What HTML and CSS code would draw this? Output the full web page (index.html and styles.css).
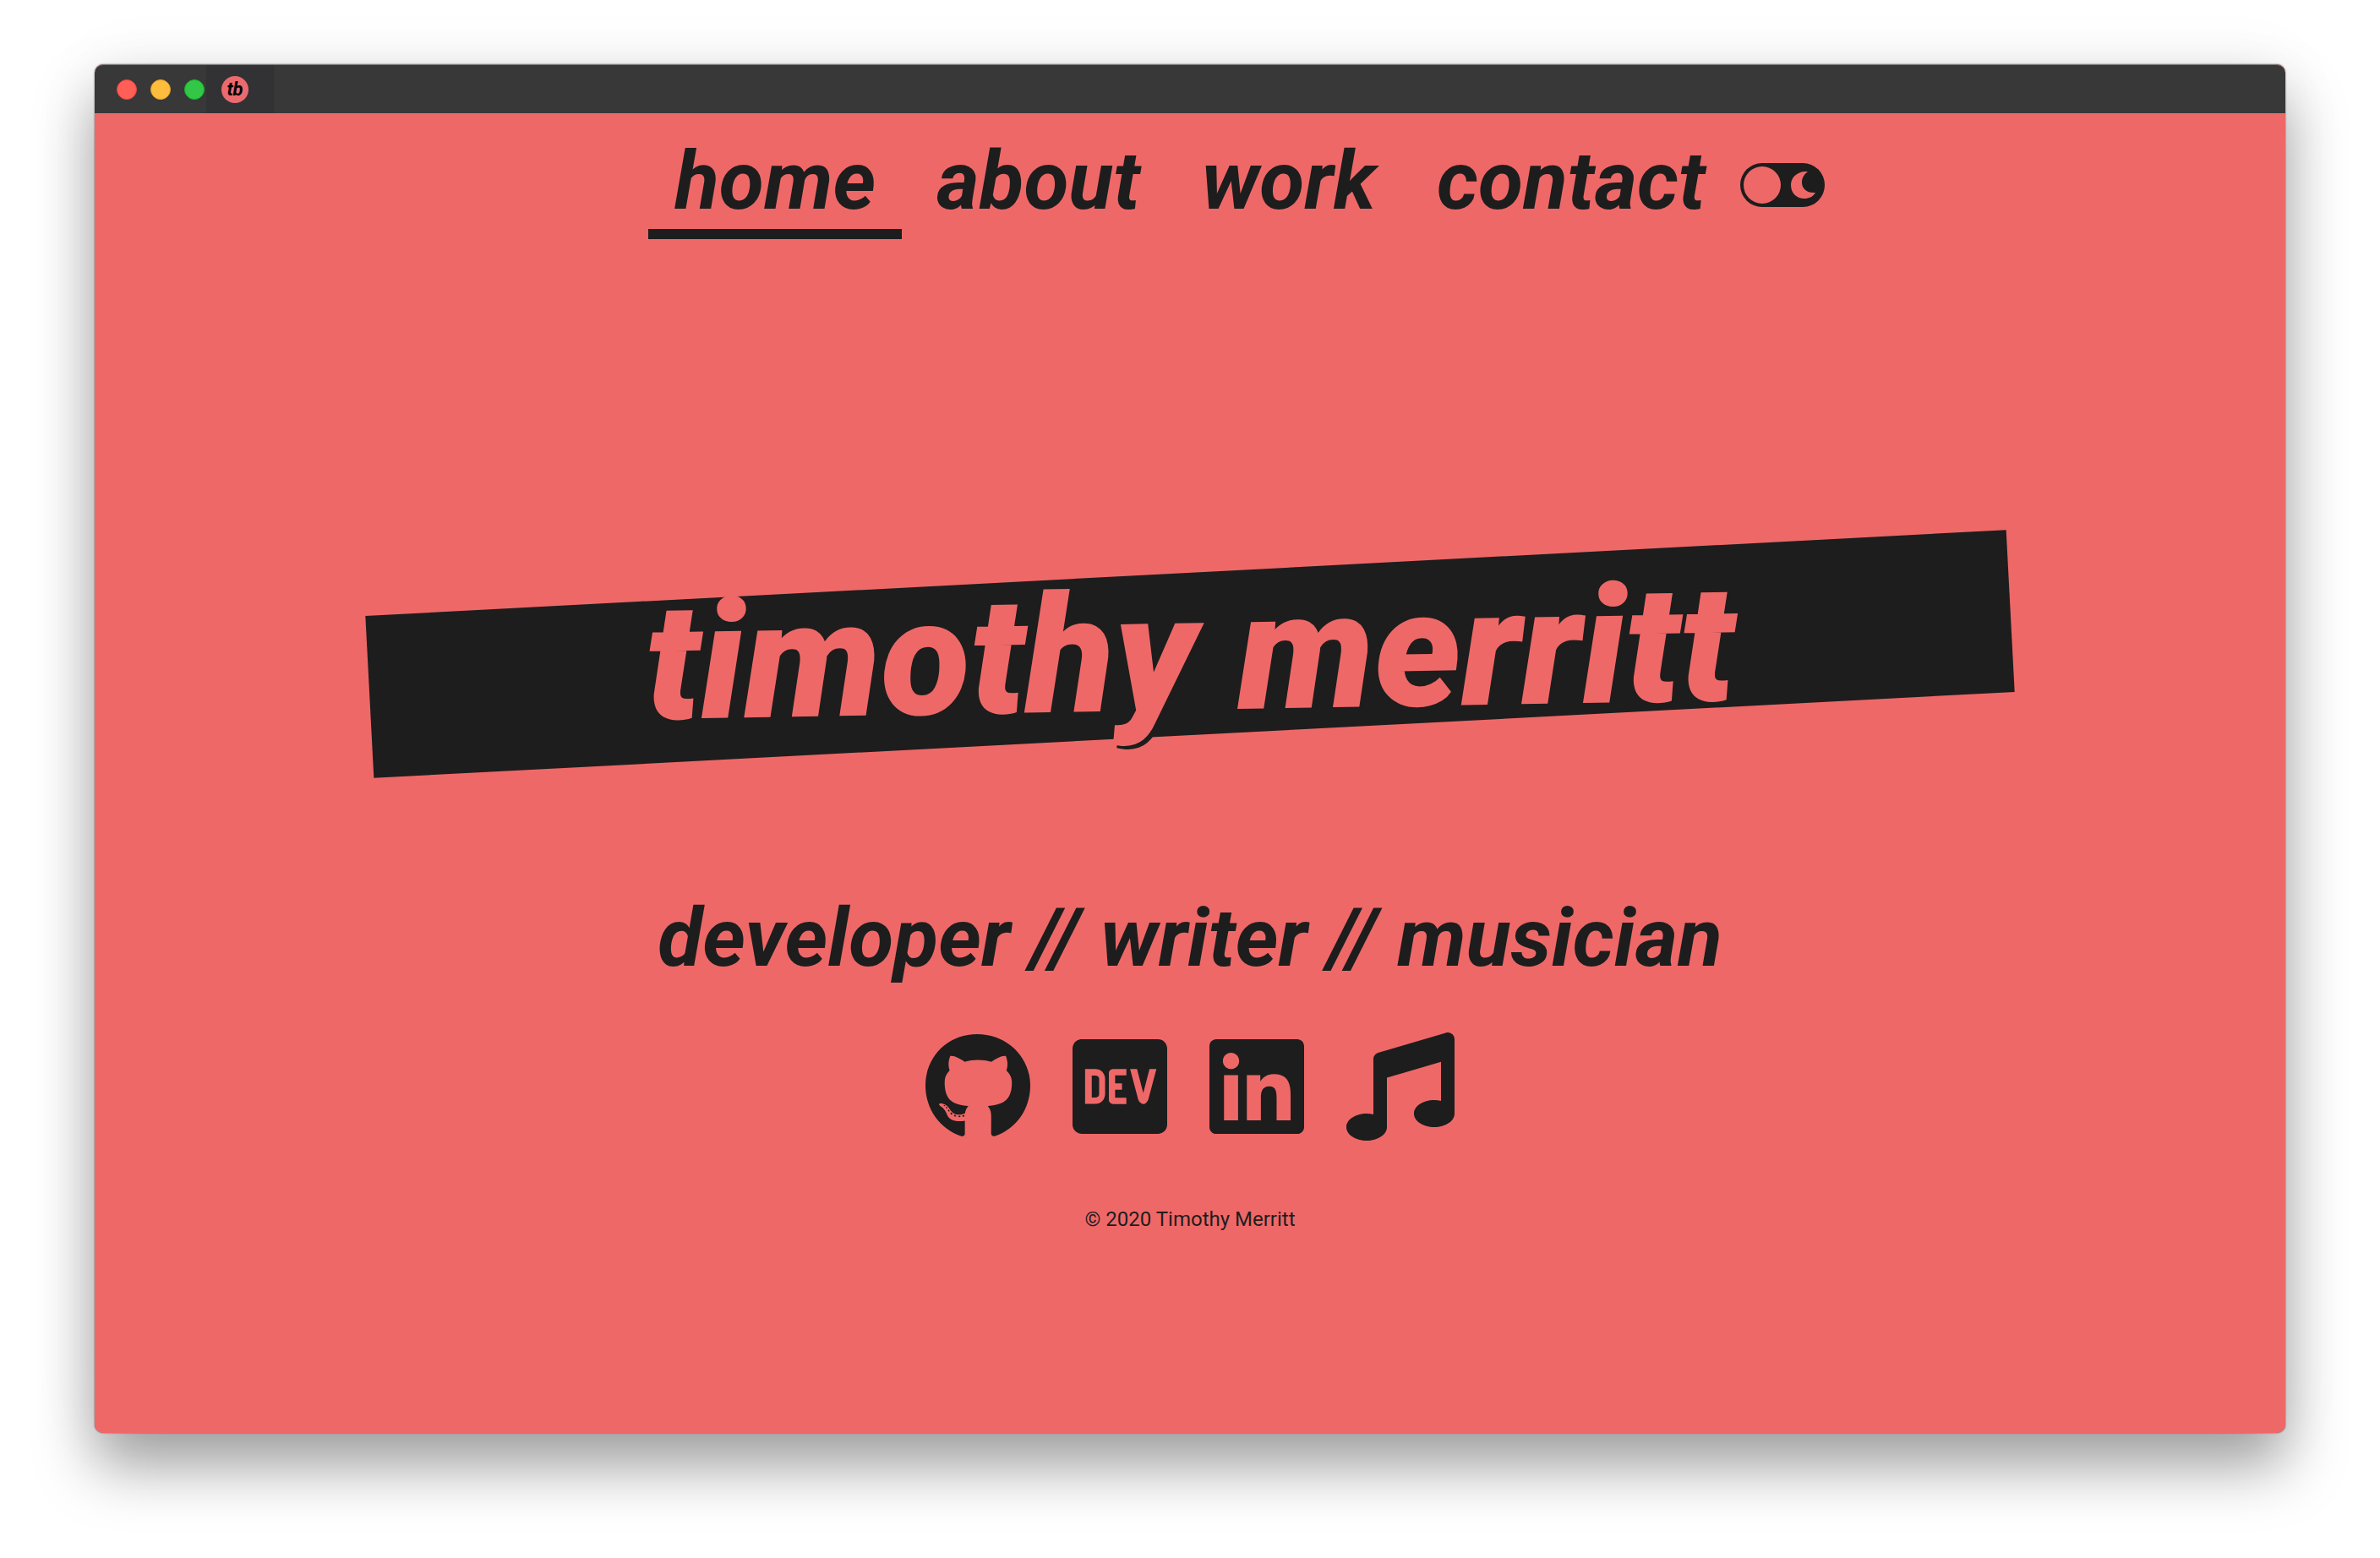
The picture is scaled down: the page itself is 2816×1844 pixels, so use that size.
FILE: index.html
```html
<!DOCTYPE html>
<html lang="en">
<head>
<meta charset="utf-8">
<meta name="viewport" content="width=device-width, initial-scale=1">
<title>timothy merritt</title>
<link rel="stylesheet" href="styles.css">
</head>
<body>
<div class="window">
  <div class="titlebar">
    <div class="lights">
      <button class="light light-close" type="button" aria-label="Close"></button>
      <button class="light light-minimize" type="button" aria-label="Minimize"></button>
      <button class="light light-zoom" type="button" aria-label="Zoom"></button>
    </div>
    <div class="tab"><span class="favicon">tb</span></div>
  </div>
  <div class="page">
    <header class="header">
      <nav class="nav">
        <a class="nav-link nav-link-active" href="#home" aria-current="page">home</a>
        <a class="nav-link" href="#about">about</a>
        <a class="nav-link" href="#work">work</a>
        <a class="nav-link" href="#contact">contact</a>
      </nav>
      <label class="toggle">
        <input class="toggle-input" type="checkbox" aria-label="Dark mode">
        <svg class="moon" viewBox="0 0 29 32" aria-hidden="true"><path d="M20 0C9-1 0 6 0 16s7 16 16 16c5 0 10-2 13-7C19 26 13 20 13 13 13 7 16 3 20 0z"/></svg>
      </label>
    </header>
    <main class="hero">
      <h1 class="banner"><span class="banner-text">timothy merritt</span></h1>
      <p class="tagline">developer // writer // musician</p>
    </main>
    <footer class="footer">
      <div class="social">
        <a href="#github" aria-label="GitHub"><svg class="icon" viewBox="0 0 496 512"><path d="M165.900 397.400c0 2-2.300 3.600-5.200 3.600-3.300.3-5.600-1.300-5.600-3.600 0-2 2.300-3.600 5.200-3.600 3-.3 5.600 1.300 5.600 3.600zm-31.100-4.500c-.7 2 1.300 4.300 4.300 4.900 2.600 1 5.600 0 6.200-2s-1.300-4.300-4.300-5.200c-2.600-.7-5.500.3-6.200 2.300zm44.200-1.700c-2.900.7-4.900 2.600-4.600 4.900.3 2 2.900 3.300 5.900 2.600 2.900-.7 4.900-2.600 4.600-4.600-.3-1.900-3-3.200-5.900-2.900zM244.800 8C106.100 8 0 113.300 0 252c0 110.900 69.800 205.800 169.500 239.200 12.800 2.300 17.300-5.600 17.300-12.100 0-6.200-.3-40.400-.3-61.400 0 0-70 15-84.700-29.800 0 0-11.400-29.100-27.800-36.600 0 0-22.900-15.700 1.600-15.400 0 0 24.900 2 38.600 25.800 21.900 38.600 58.600 27.500 72.900 20.900 2.300-16 8.800-27.100 16-33.700-55.900-6.200-112.300-14.300-112.300-110.500 0-27.500 7.600-41.300 23.600-58.900-2.600-6.500-11.100-33.300 2.600-67.900 20.900-6.500 69 27 69 27 20-5.600 41.500-8.500 62.800-8.500s42.800 2.900 62.800 8.500c0 0 48.100-33.600 69-27 13.700 34.700 5.200 61.400 2.600 67.900 16 17.700 25.800 31.500 25.800 58.900 0 96.500-58.900 104.200-114.800 110.400 9.200 7.900 17 22.900 17 46.400 0 33.700-.3 75.400-.3 83.600 0 6.500 4.600 14.400 17.300 12.100C428.200 457.800 496 362.900 496 252 496 113.300 383.500 8 244.800 8zM97.200 352.900c-1.300 1-1 3.300.7 5.200 1.600 1.600 3.900 2.300 5.200 1 1.300-1 1-3.300-.7-5.200-1.600-1.600-3.900-2.300-5.200-1zm-10.800-8.100c-.7 1.300.3 2.900 2.300 3.900 1.600 1 3.600.7 4.300-.7.7-1.300-.3-2.900-2.300-3.900-2-.6-3.600-.3-4.300.7zm32.400 35.600c-1.600 1.300-1 4.300 1.300 6.200 2.300 2.300 5.200 2.600 6.500 1 1.300-1.300.7-4.300-1.300-6.200-2.200-2.300-5.200-2.600-6.500-1zm-11.400-14.700c-1.600 1-1.600 3.600 0 5.900 1.600 2.300 4.300 3.300 5.600 2.300 1.600-1.300 1.600-3.900 0-6.200-1.400-2.300-4-3.300-5.600-2z"/></svg></a>
        <a href="#dev" aria-label="DEV"><svg class="icon" viewBox="0 0 448 512"><path d="M120.120 208.290c-3.880-2.900-7.770-4.350-11.650-4.350H91.030v104.470h17.450c3.880 0 7.770-1.450 11.650-4.350 3.880-2.900 5.820-7.250 5.820-13.060v-69.650c-.01-5.800-1.960-10.160-5.830-13.060zM404.100 32H43.900C19.700 32 .06 51.590 0 75.800v360.400C.06 460.410 19.700 480 43.900 480h360.200c24.210 0 43.840-19.590 43.900-43.800V75.800c-.06-24.210-19.700-43.800-43.900-43.800zM154.200 291.190c0 18.810-11.610 47.310-48.360 47.250h-46.400V172.980h47.380c35.440 0 47.360 28.460 47.370 47.280l.01 70.930zm100.680-88.660H201.600v38.420h32.570v29.570H201.600v38.410h53.290v29.570h-62.180c-11.160.29-20.440-8.530-20.720-19.690V193.700c-.27-11.150 8.560-20.410 19.710-20.690h63.190l-.01 29.520zm103.640 115.290c-13.200 30.750-36.850 24.630-47.440 0l-38.530-144.800h32.570l29.710 113.720 29.570-113.720h32.580l-38.460 144.800z"/></svg></a>
        <a href="#linkedin" aria-label="LinkedIn"><svg class="icon" viewBox="0 0 448 512"><path d="M416 32H31.900C14.300 32 0 46.500 0 64.300v383.400C0 465.500 14.300 480 31.900 480H416c17.600 0 32-14.500 32-32.300V64.300c0-17.800-14.400-32.300-32-32.300zM135.400 416H69V202.200h66.500V416zm-33.200-243c-21.300 0-38.500-17.300-38.500-38.500S80.900 96 102.200 96c21.200 0 38.500 17.300 38.500 38.500 0 21.300-17.200 38.500-38.500 38.500zm282.100 243h-66.400V312c0-24.800-.5-56.700-34.500-56.700-34.600 0-39.900 27-39.900 54.900V416h-66.400V202.200h63.700v29.200h.9c8.900-16.800 30.600-34.500 62.900-34.500 67.200 0 79.700 44.300 79.700 101.900V416z"/></svg></a>
        <a href="#music" aria-label="Music"><svg class="icon" viewBox="0 0 512 512"><path d="M511.990 32.010c0-21.710-21.100-37.010-41.600-30.510L150.400 96c-13.300 4.200-22.400 16.500-22.400 30.500v261.420c-10.050-2.380-20.720-3.920-32-3.920-53.020 0-96 28.650-96 64s42.980 64 96 64 96-28.650 96-64V214.310l256-75.020v184.630c-10.050-2.380-20.720-3.920-32-3.920-53.020 0-96 28.650-96 64s42.980 64 96 64 96-28.650 96-64l-.01-351.990z"/></svg></a>
      </div>
      <p class="copyright">© 2020 Timothy Merritt</p>
    </footer>
  </div>
</div>
</body>
</html>
```
FILE: styles.css
```css
:root {
  --coral: #ef6868;
  --ink: #1d1d1d;
}

* {
  box-sizing: border-box;
}

body {
  margin: 0;
  min-height: 100vh;
  padding: 76px 112px 148px;
  display: flex;
  background: #fff;
  color: var(--ink);
  font-family: Roboto, "Liberation Sans", sans-serif;
}

.window {
  flex: 1;
  display: flex;
  flex-direction: column;
  overflow: hidden;
  border-radius: 10px;
  background: var(--coral);
  box-shadow: 0 0 2px rgba(0, 0, 0, 0.6), 0 0 80px rgba(0, 0, 0, 0.06), 0 40px 70px rgba(0, 0, 0, 0.36);
}

.titlebar {
  display: flex;
  height: 58px;
  border-top: 1px solid #7c7c7c;
  border-radius: 10px 10px 0 0;
  background: #383838;
}

.lights {
  display: flex;
  align-items: center;
  gap: 16px;
  padding: 0 2px 0 26px;
}

.light {
  width: 24px;
  height: 24px;
  padding: 0;
  border: 1px solid;
  border-radius: 50%;
}

.light-close {
  background: #ff5f57;
  border-color: #e2463f;
}

.light-minimize {
  background: #ffbd3e;
  border-color: #e1a02f;
}

.light-zoom {
  background: #33c748;
  border-color: #1dad2b;
}

.tab {
  display: flex;
  align-items: center;
  width: 80px;
  padding-left: 18px;
  background: #323234;
}

.favicon {
  width: 32px;
  height: 32px;
  border-radius: 50%;
  background: #ec6a6e;
  color: #000;
  font-size: 22px;
  font-style: italic;
  font-weight: 700;
  line-height: 32px;
  text-align: center;
}

.page {
  flex: 1;
  display: flex;
  flex-direction: column;
}

.header {
  display: flex;
  justify-content: center;
  align-items: center;
  gap: 10px;
  padding: 24px 0 0 110px;
}

.nav {
  display: flex;
  gap: 10px;
}

.nav-link {
  padding: 0 31px;
  border-bottom: 12px solid transparent;
  color: inherit;
  font-size: 97px;
  font-style: italic;
  font-weight: 700;
  line-height: 113px;
  text-decoration: none;
}

.nav-link-active {
  border-color: var(--ink);
}

.toggle {
  position: relative;
  display: flex;
  margin-bottom: 4px;
}

.toggle-input {
  appearance: none;
  display: flex;
  width: 100px;
  height: 52px;
  margin: 0;
  padding: 4px;
  border-radius: 26px;
  background: var(--ink);
}

.toggle-input::before {
  content: "";
  width: 44px;
  height: 44px;
  border-radius: 50%;
  background: var(--coral);
}

.moon {
  position: absolute;
  top: 10px;
  right: 11px;
  width: 29px;
  height: 32px;
  fill: var(--coral);
}

.hero {
  display: flex;
  flex-direction: column;
  align-items: center;
  padding-top: 395px;
}

.banner {
  width: 75%;
  margin: 0;
  background: var(--ink);
  color: var(--coral);
  font-size: 194px;
  font-style: italic;
  font-weight: 900;
  line-height: 192px;
  text-align: center;
  text-shadow: 4px 4px var(--ink);
  transform: rotate(-3deg);
}

.banner-text {
  display: block;
  transform: rotate(2deg);
}

.tagline {
  margin: 184px 0 0;
  font-size: 97px;
  font-style: italic;
  font-weight: 700;
  line-height: 113px;
}

.footer {
  display: flex;
  flex-direction: column;
  align-items: center;
  padding-top: 55px;
}

.social {
  display: flex;
  gap: 50px;
}

.icon {
  display: block;
  height: 128px;
  fill: var(--ink);
}

.copyright {
  margin: 78px 0 0;
  font-size: 24px;
  line-height: 30px;
}
```
